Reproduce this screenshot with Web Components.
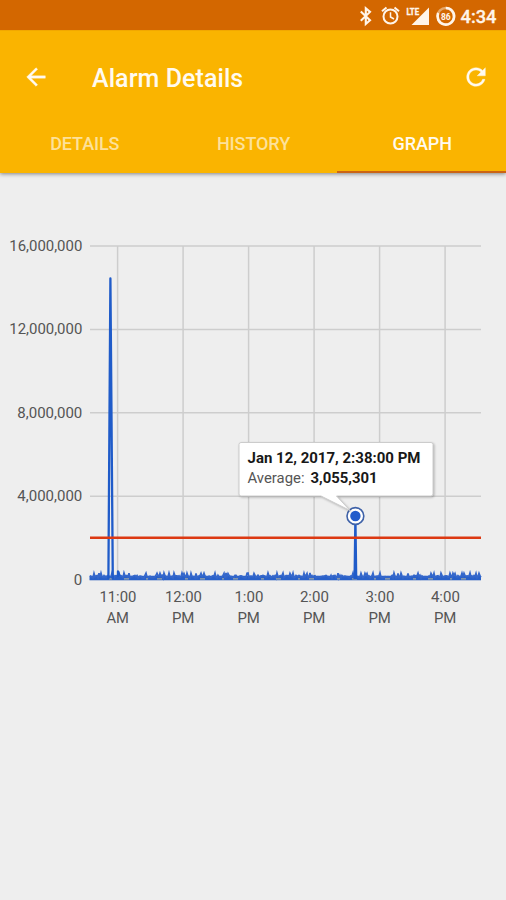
<!DOCTYPE html>
<html lang="en">
<head>
<meta charset="utf-8">
<meta name="viewport" content="width=device-width, initial-scale=1">
<title>Alarm Details</title>
<style>
    body {
        margin: 0;
        background: #eee;
        font-family: Roboto, "Liberation Sans", sans-serif;
    }
</style>
</head>
<body>
<alarm-screen>
    <status-bar slot="header" time="4:34" battery="86"></status-bar>
    <app-toolbar slot="header">Alarm Details</app-toolbar>
    <tab-bar slot="header">
        <tab-item>Details</tab-item>
        <tab-item>History</tab-item>
        <tab-item active>Graph</tab-item>
    </tab-bar>
    <alarm-chart threshold="2000000"></alarm-chart>
</alarm-screen>

<script>
class AlarmScreen extends HTMLElement {
    constructor() {
        super();
        this.attachShadow({ mode: 'open' });
    }

    connectedCallback() {
        this.shadowRoot.innerHTML = `
        <style>
            :host {
                display: flex;
                flex-direction: column;
                height: 900px;
                overflow: hidden;
                background: #eee;
            }

            header {
                background: #fab400;
                box-shadow: 0 1px 4px rgba(0, 0, 0, 0.45);
            }

            main { flex: 1; }
        </style>
        <header><slot name="header"></slot></header>
        <main><slot></slot></main>
        `;
    }
}
customElements.define('alarm-screen', AlarmScreen);

class StatusBar extends HTMLElement {
    constructor() {
        super();
        this.attachShadow({ mode: 'open' });
    }

    connectedCallback() {
        const time = this.getAttribute('time') || '';
        const battery = this.getAttribute('battery') || '';

        this.shadowRoot.innerHTML = `
        <style>
            :host {
                display: block;
                height: 30px;
                background: #d36700;
            }

            svg { display: block; }

            text {
                fill: #fff5ea;
                font-family: Roboto, sans-serif;
                font-weight: 700;
            }
        </style>
        <svg width="506" height="30" viewBox="0 0 506 30" fill="none" stroke="#fff5ea">
            <!-- bluetooth -->
            <path d="M360.8 11.4 L370 20.3 L365.8 24 V8.2 L370 11.9 L360.8 20.8" stroke-width="2.1"/>
            <!-- alarm clock -->
            <circle cx="390.5" cy="16.5" r="7" stroke-width="2"/>
            <path d="M390.5 12.3 V17 L394 19" stroke-width="1.5"/>
            <path d="M382 11.2 L386.5 7.4 M399 11.2 L394.5 7.4" stroke-width="2"/>
            <!-- signal -->
            <path d="M429 7.5 V25 H411.5 Z" fill="#fff5ea" stroke="none"/>
            <text x="406.5" y="14.7" font-size="9" textLength="12.5" lengthAdjust="spacingAndGlyphs" stroke="#fff5ea" stroke-width="0.4">LTE</text>
            <!-- battery -->
            <circle cx="445.8" cy="16.3" r="8.3" stroke="#e6a768" stroke-width="2.4"/>
            <path d="M445.8 8 A8.3 8.3 0 1 1 438.2 13" stroke-width="2.6"/>
            <text x="445.8" y="19.6" font-size="8.5" text-anchor="middle" stroke="none">${battery}</text>
            <text x="460.5" y="22.7" font-size="18" textLength="36" lengthAdjust="spacingAndGlyphs" stroke="#fff5ea" stroke-width="0.3" style="font-weight:500">${time}</text>
        </svg>
        `;
    }
}
customElements.define('status-bar', StatusBar);

class AppToolbar extends HTMLElement {
    constructor() {
        super();
        this.attachShadow({ mode: 'open' });
    }

    connectedCallback() {
        this.shadowRoot.innerHTML = `
        <style>
            :host {
                display: flex;
                align-items: center;
                height: 84px;
                padding: 9px 16px 0 22px;
                box-sizing: border-box;
                color: #fffaf0;
                border-top: 1px solid #f2a800;
            }

            .title {
                flex: 1;
                margin: 2px 0 0 42px;
                font-size: 25px;
                font-weight: 500;
                letter-spacing: 0.07px;
            }

            svg {
                width: 28px;
                height: 28px;
                fill: currentColor;
                stroke: currentColor;
                stroke-width: 0.3;
            }
        </style>
        <svg viewBox="0 0 24 24"><path d="M20 11H7.83l5.59-5.59L12 4l-8 8 8 8 1.41-1.41L7.83 13H20v-2z"/></svg>
        <span class="title"><slot></slot></span>
        <svg viewBox="0 0 24 24"><path d="M17.65 6.35C16.2 4.9 14.21 4 12 4c-4.42 0-7.99 3.58-7.99 8s3.57 8 7.99 8c3.73 0 6.84-2.55 7.73-6h-2.08c-.82 2.33-3.04 4-5.65 4-3.31 0-6-2.69-6-6s2.69-6 6-6c1.66 0 3.14.69 4.22 1.78L13 11h7V4l-2.35 2.35z"/></svg>
        `;
    }
}
customElements.define('app-toolbar', AppToolbar);

class TabBar extends HTMLElement {
    constructor() {
        super();
        this.attachShadow({ mode: 'open' });
    }

    connectedCallback() {
        this.shadowRoot.innerHTML = `
        <style>
            :host {
                display: grid;
                grid-template-columns: repeat(3, 1fr);
                height: 59px;
            }
        </style>
        <slot></slot>
        `;
    }
}
customElements.define('tab-bar', TabBar);

class TabItem extends HTMLElement {
    constructor() {
        super();
        this.attachShadow({ mode: 'open' });
    }

    connectedCallback() {
        this.shadowRoot.innerHTML = `
        <style>
            :host {
                display: flex;
                align-items: center;
                justify-content: center;
                box-sizing: border-box;
                border-bottom: 2px solid transparent;
                padding: 2px 0 0 1px;
                color: #fde19a;
                font-size: 18px;
                font-weight: 500;
                letter-spacing: -0.1px;
                text-transform: uppercase;
            }

            :host([active]) {
                color: #fffaf0;
                border-bottom-color: #cb6414;
            }
        </style>
        <slot></slot>
        `;
    }
}
customElements.define('tab-item', TabItem);

class AlarmChart extends HTMLElement {
    constructor() {
        super();
        this.attachShadow({ mode: 'open' });
    }

    // deterministic baseline traffic, one sample per pixel
    noise(from, to) {
        let seed = 17;
        const points = [];
        for (let x = from; x <= to; x += 1) {
            seed = (seed * 1103515245 + 12345) % 2147483648;
            const r = seed / 2147483648;
            points.push(`${x},${(405 - r * 3.2 - (r > 0.85 ? 1.8 : 0)).toFixed(1)}`);
        }
        return points.join(' ');
    }

    connectedCallback() {
        const left = 90;
        const right = 481;
        const bottom = 406.5;
        const perUnit = 333.5 / 16000000;
        const y = value => bottom - value * perUnit;
        const threshold = y(Number(this.getAttribute('threshold')));

        const label = (text, x, baseline, width, anchor) =>
            `<text x="${x}" y="${baseline}" text-anchor="${anchor}" textLength="${width}" lengthAdjust="spacingAndGlyphs">${text}</text>`;

        const widths = { 10: 73, 9: 65, 1: 8.5 };
        const rows = [16000000, 12000000, 8000000, 4000000, 0].map(value => {
            const text = value.toLocaleString('en-US');
            // whole-pixel baselines keep the small digits even
            const baseline = value ? Math.floor(y(value) + 5.4) : 412;
            return `
            <path class="grid" d="M${left} ${y(value)}H${right}"/>
            ${label(text, 82.3, baseline, widths[text.length], 'end')}`;
        }).join('');

        const hours = ['11:00 AM', '12:00 PM', '1:00 PM', '2:00 PM', '3:00 PM', '4:00 PM'];
        const columns = hours.map((name, i) => {
            const x = 117.6 + i * 65.5;
            const [hour, half] = name.split(' ');
            return `
            <path class="grid" d="M${x} ${y(16000000)}V${bottom}"/>
            ${label(hour, x + 0.3, 429, hour.length > 4 ? 37 : 29, 'middle')}
            ${label(half, x + 0.1, 450, 22.5, 'middle')}`;
        }).join('');

        this.shadowRoot.innerHTML = `
        <style>
            :host { display: block; }

            svg { display: block; }

            text {
                font-family: Roboto, sans-serif;
                font-size: 14.2px;
                fill: #555;
            }

            .strong {
                font-weight: 700;
                fill: #181818;
            }

            .grid {
                fill: none;
                stroke: #cdcdcd;
                stroke-width: 1.5;
            }

            .series {
                fill: none;
                stroke: #1f5bc9;
                stroke-width: 2.3;
                stroke-linejoin: round;
            }

            .noise {
                fill: none;
                stroke: #3467cb;
                stroke-width: 1.7;
            }

            .bubble {
                fill: #fff;
                stroke: #ccc;
                stroke-width: 1;
                filter: drop-shadow(1px 1px 1px rgba(0, 0, 0, 0.25));
            }
        </style>
        <svg width="506" height="727" viewBox="0 0 506 727">
            ${rows}
            ${columns}
            <path d="M${left - 0.5} 405H${right}" stroke="#2860c9" stroke-width="4.5"/>
            <polyline class="noise" points="${this.noise(left, right)}"/>
            <path d="M${left + 19} 405.9H${right}" stroke="#b9b79c" stroke-width="1" stroke-dasharray="3 12 5 17 2 9 5 23"/>
            <path class="series" d="M108.4 406L110.4 105.5L112.8 406M118 404V398.5L119.5 403"/>
            <path class="series" d="M354.6 406L355.4 344L356.2 406"/>
            <path d="M${left} ${threshold}H${right}" stroke="#dc3912" stroke-width="2.6"/>
            <circle cx="355.4" cy="343" r="8.4" fill="#fff" stroke="#3f62a8" stroke-width="1.6"/>
            <circle cx="355.4" cy="343" r="5.2" fill="#225ccb"/>
            <path class="bubble" d="M241 269.5H431Q433 269.5 433 271.5V321Q433 323 431 323H336.5L350 337.5L321 323H241Q239 323 239 321V271.5Q239 269.5 241 269.5Z"/>
            <text class="strong" x="247.5" y="290" textLength="173" lengthAdjust="spacingAndGlyphs">Jan 12, 2017, 2:38:00 PM</text>
            <text x="247.5" y="310" textLength="57" lengthAdjust="spacingAndGlyphs">Average:</text>
            <text class="strong" x="310.5" y="310" textLength="67" lengthAdjust="spacingAndGlyphs">3,055,301</text>
        </svg>
        `;
    }
}
customElements.define('alarm-chart', AlarmChart);
</script>
</body>
</html>
